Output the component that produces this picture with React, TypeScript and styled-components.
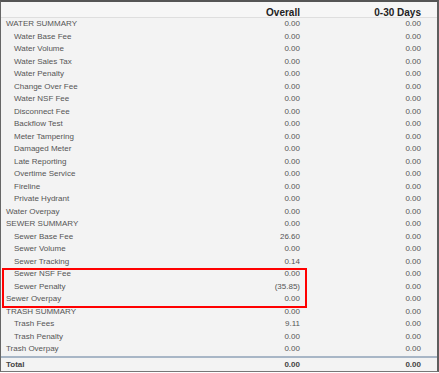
import React from "react";
import styled, { createGlobalStyle } from "styled-components";

const Global = createGlobalStyle`
  html, body { margin: 0; padding: 0; background: #ffffff; }
  body { font-family: "Liberation Sans", Arial, sans-serif; }
`;

const Panel = styled.div`
  position: relative;
  box-sizing: border-box;
  width: 439px;
  height: 372px;
  background: #f3f3f3;
  border-top: 2px solid #555;
  border-left: 1px solid #666;
  border-right: 2px solid #5e5e5e;
  border-bottom: 1px solid #777;
  display: flex;
  flex-direction: column;
`;

const Grid = styled.div<{ $kind?: "head" | "body" | "total" }>`
  display: grid;
  grid-template-columns: 1fr 121px 121px;
  padding-right: 16px;
  box-sizing: border-box;
  align-items: center;
  ${(p) =>
    p.$kind === "head"
      ? `height: 16px; padding-top: 5px; line-height: 11px; font-size: 10px; font-weight: bold; color: #222; background: #f6f6f6; border-bottom: 1px solid #dedede;`
      : p.$kind === "total"
      ? `height: 13px; line-height: 13px; font-size: 8px; font-weight: bold; color: #444; border-top: 2px solid #a8b6c6;`
      : `height: 12.5px; line-height: 12.5px; font-size: 8px; color: #555;`}
`;

const Label = styled.div<{ $indent?: boolean }>`
  padding-left: ${(p) => (p.$indent ? "13px" : "5px")};
  white-space: nowrap;
`;

const Num = styled.div`
  text-align: right;
  white-space: nowrap;
`;

const Highlight = styled.div`
  position: absolute;
  left: 1px;
  top: 266px;
  width: 305px;
  height: 40px;
  box-sizing: border-box;
  border: 2px solid #f00;
  pointer-events: none;
`;

type Row = [string, boolean, string, string];

const rows: Row[] = [
  ["WATER SUMMARY", false, "0.00", "0.00"],
  ["Water Base Fee", true, "0.00", "0.00"],
  ["Water Volume", true, "0.00", "0.00"],
  ["Water Sales Tax", true, "0.00", "0.00"],
  ["Water Penalty", true, "0.00", "0.00"],
  ["Change Over Fee", true, "0.00", "0.00"],
  ["Water NSF Fee", true, "0.00", "0.00"],
  ["Disconnect Fee", true, "0.00", "0.00"],
  ["Backflow Test", true, "0.00", "0.00"],
  ["Meter Tampering", true, "0.00", "0.00"],
  ["Damaged Meter", true, "0.00", "0.00"],
  ["Late Reporting", true, "0.00", "0.00"],
  ["Overtime Service", true, "0.00", "0.00"],
  ["Fireline", true, "0.00", "0.00"],
  ["Private Hydrant", true, "0.00", "0.00"],
  ["Water Overpay", false, "0.00", "0.00"],
  ["SEWER SUMMARY", false, "0.00", "0.00"],
  ["Sewer Base Fee", true, "26.60", "0.00"],
  ["Sewer Volume", true, "0.00", "0.00"],
  ["Sewer Tracking", true, "0.14", "0.00"],
  ["Sewer NSF Fee", true, "0.00", "0.00"],
  ["Sewer Penalty", true, "(35.85)", "0.00"],
  ["Sewer Overpay", false, "0.00", "0.00"],
  ["TRASH SUMMARY", false, "0.00", "0.00"],
  ["Trash Fees", true, "9.11", "0.00"],
  ["Trash Penalty", true, "0.00", "0.00"],
  ["Trash Overpay", false, "0.00", "0.00"],
];

export default function App() {
  return (
    <>
      <Global />
      <Panel>
        <Grid $kind="head">
          <Label />
          <Num>Overall</Num>
          <Num>0-30 Days</Num>
        </Grid>
        {rows.map(([label, indent, a, b]) => (
          <Grid key={label}>
            <Label $indent={indent}>{label}</Label>
            <Num>{a}</Num>
            <Num>{b}</Num>
          </Grid>
        ))}
        <Grid $kind="total">
          <Label>Total</Label>
          <Num>0.00</Num>
          <Num>0.00</Num>
        </Grid>
        <Highlight />
      </Panel>
    </>
  );
}
